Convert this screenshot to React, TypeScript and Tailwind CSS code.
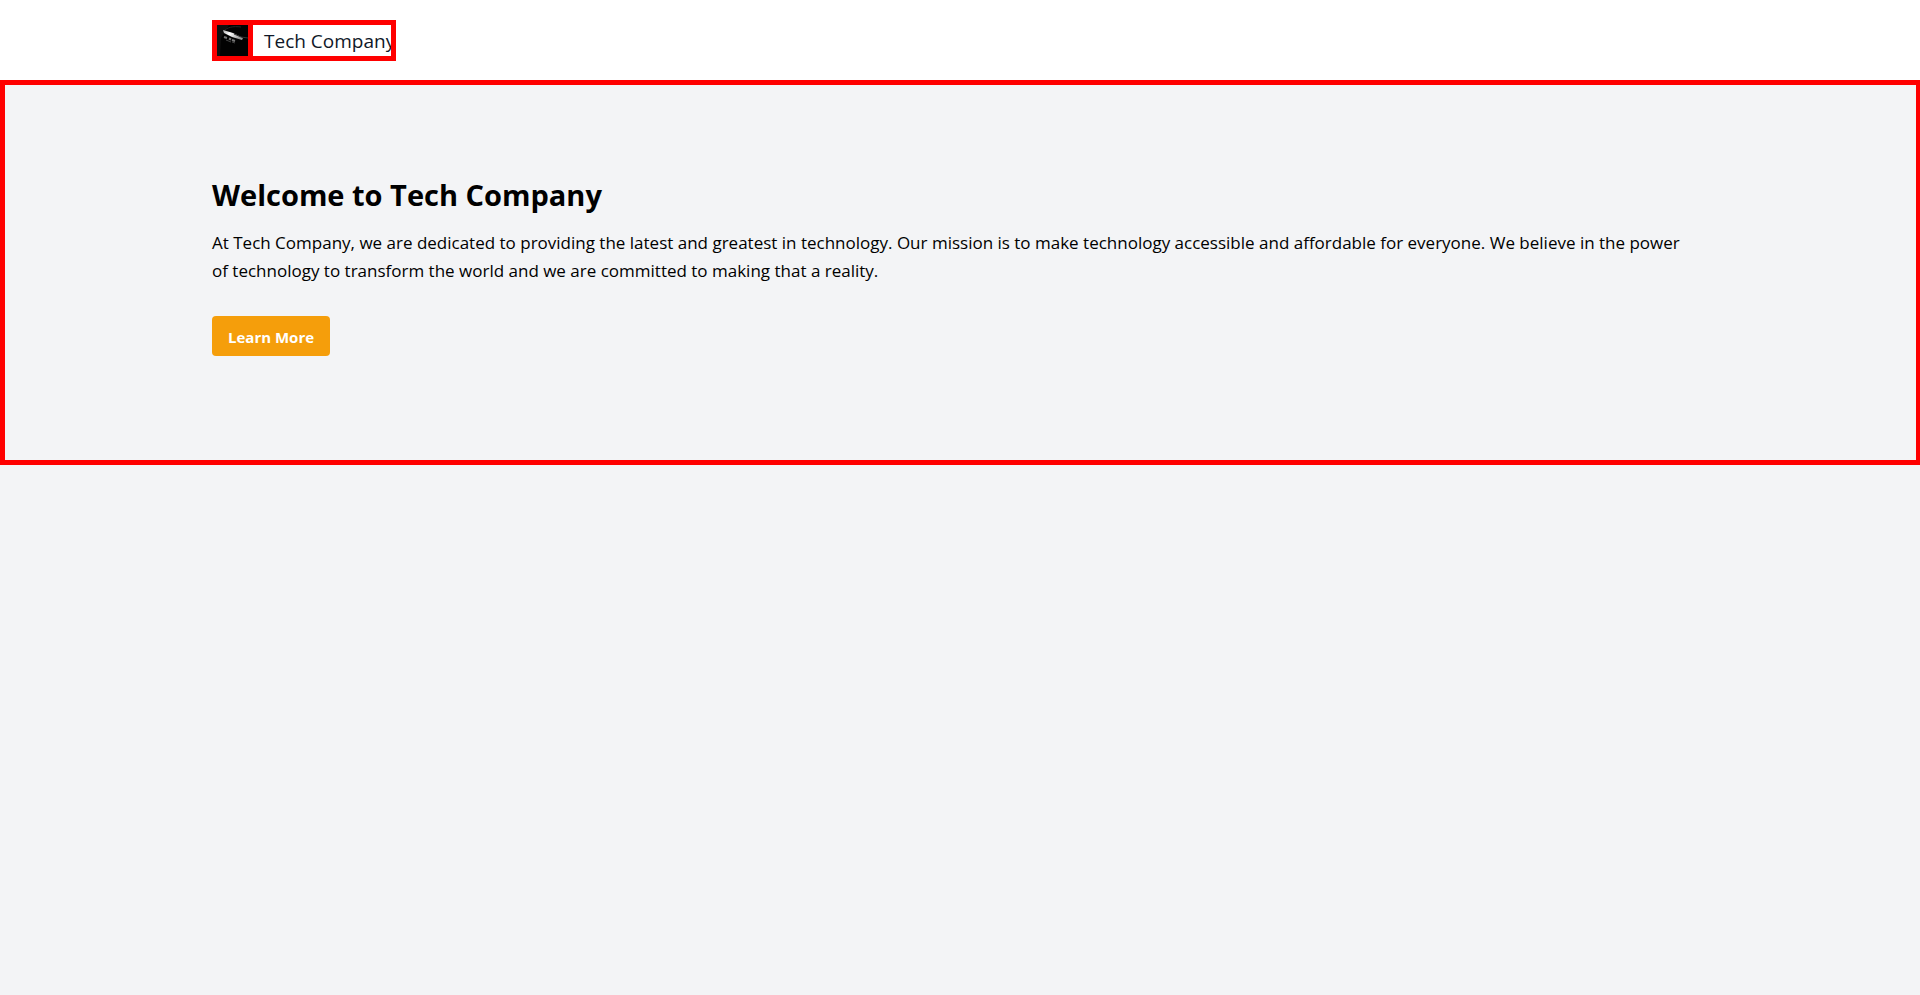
const frame =
  "after:pointer-events-none after:absolute after:top-0 after:left-0 after:-right-px after:-bottom-px after:border-5 after:border-[#ff0000] after:content-['']";

function LogoPicture() {
  return (
    <span className={`relative block size-10 shrink-0 bg-black ${frame}`}>
      <svg viewBox="0 0 40 40" className="block size-10" aria-hidden="true">
        <defs>
          <linearGradient id="beam" x1="0" y1="0" x2="1" y2="0.4">
            <stop offset="0" stopColor="#aaa" />
            <stop offset="0.4" stopColor="#fff" />
            <stop offset="1" stopColor="#999" />
          </linearGradient>
        </defs>
        <rect width="40" height="40" fill="#020202" />
        <path d="M5 5H17L9 18L8 36H5Z" fill="#101010" />
        <path d="M11 12C15 7 21 6 29 7" fill="none" stroke="#262626" />
        <path d="M11 10L21 13L31 18L30 20L20 17L12 13Z" fill="url(#beam)" />
        <path d="M22 14Q29 18 36 18" fill="none" stroke="#333" />
        <path d="M12 17L15 18M17 18.500L19 19.500M20 20L23 21" stroke="#777" strokeWidth="2" />
        <path d="M14 20L19 22M20 22L23 23" stroke="#444" strokeWidth="1" />
      </svg>
    </span>
  );
}

export default function App() {
  return (
    <div className="min-h-screen overflow-x-hidden bg-gray-100 font-['Open_Sans','Noto_Sans',sans-serif] text-black">
      <header className="bg-white">
        <div className="mx-auto flex max-w-[1536px] p-5">
          <a href="#" className={`relative flex items-center text-gray-900 ${frame}`}>
            <LogoPicture />
            <span className="ml-3 pt-[2px] text-[19px] leading-7">Tech Company</span>
          </a>
        </div>
      </header>
      <main>
        <section className={`relative pt-[97px] pb-27 ${frame}`}>
          <div className="mx-auto max-w-[1536px] px-5">
            <h1 className="mb-4 text-[29px] leading-9 font-bold">Welcome to Tech Company</h1>
            <p className="mb-[31px] pr-4 text-[17px] leading-7">
              At Tech Company, we are dedicated to providing the latest and greatest in technology. Our
              mission is to make technology accessible and affordable for everyone. We believe in the
              power of technology to transform the world and we are committed to making that a reality.
            </p>
            <button
              type="button"
              className="block rounded bg-[#f59e0b] px-4 pt-[9px] pb-[7px] text-[15px] leading-6 font-bold text-white"
            >
              Learn More
            </button>
          </div>
        </section>
      </main>
    </div>
  );
}
